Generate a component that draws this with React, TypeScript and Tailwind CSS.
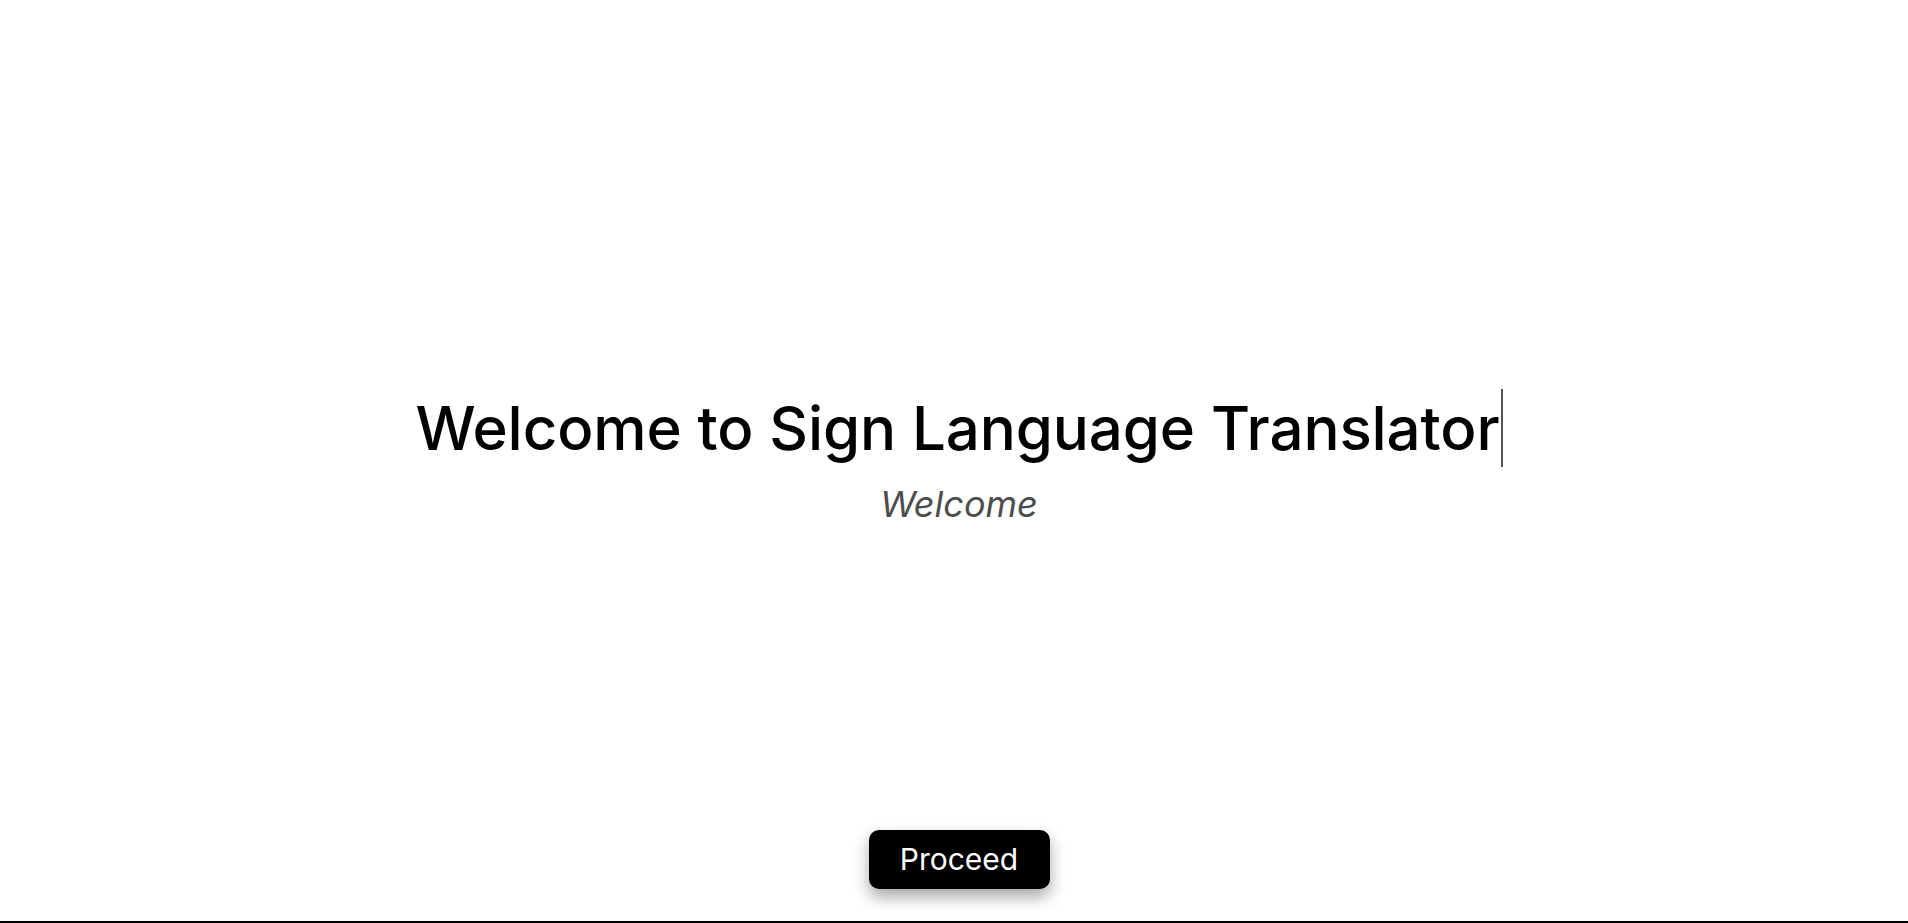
import { useState } from "react";

const App = () => {
  const [started, setStarted] = useState(false);

  return (
    <div className="bg-white" style={{ fontFamily: "Inter, 'Open Sans', sans-serif" }}>
      <div className="flex h-[921px] flex-col pl-[10px]">
        <div className="flex-1" />

        {/* Heading */}
        <div className="flex flex-col items-center pt-[25px]">
          <h1 className="inline-block border-r-2 border-[#555] pr-[1px] text-[60px] leading-[78px] font-medium tracking-[-0.1px] text-black">
            Welcome to Sign Language Translator
          </h1>
          <p className="mt-[15px] text-[36px] leading-[44px] italic text-[#4d4d4d]">
            {started ? "Let's go" : "Welcome"}
          </p>
        </div>

        {/* Button */}
        <div className="flex flex-1 items-end justify-center pb-[32px]">
          <button
            onClick={() => setStarted(true)}
            className="h-[59px] w-[181px] rounded-[10px] bg-black text-[30px] text-white shadow-[0_8px_16px_rgba(0,0,0,0.35)]"
          >
            Proceed
          </button>
        </div>
      </div>
      <div className="h-[2px] bg-black" />
    </div>
  );
};

export default App;
